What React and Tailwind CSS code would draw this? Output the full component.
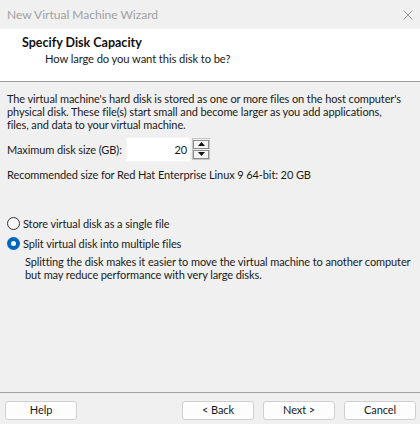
import React from "react";

function Btn({ children, className = "" }) {
  return (
    <div
      className={
        "h-[19px] w-[72px] flex items-center justify-center rounded-[3px] border border-[#d0d0d0] bg-[#fdfdfd] text-[11px] text-[#1a1a1a] " +
        className
      }
    >
      {children}
    </div>
  );
}

function SpinBtn({ up }) {
  return (
    <div className="w-[16px] h-[9px] border border-[#8c8c8c] bg-[#f4f4f4] flex items-center justify-center">
      {up ? (
        <svg width="7" height="4" viewBox="0 0 7 4">
          <path d="M3.5 0 L7 4 L0 4 Z" fill="#111" />
        </svg>
      ) : (
        <svg width="7" height="4" viewBox="0 0 7 4">
          <path d="M0 0 L7 0 L3.5 4 Z" fill="#111" />
        </svg>
      )}
    </div>
  );
}

export default function App() {
  return (
    <div className="w-[420px] h-[424px] bg-[#f0f0f0] flex flex-col overflow-hidden text-[#1a1a1a] font-['Lato',sans-serif] tracking-[-0.1px]">
      {/* Title bar */}
      <div className="h-[29px] flex items-center justify-between pl-[7px] pr-[7px] shrink-0">
        <span className="text-[12px] text-[#a0a0a0] tracking-normal">New Virtual Machine Wizard</span>
        <svg width="10" height="10" viewBox="0 0 10 10">
          <path d="M0.5 0.5 L9.5 9.5 M9.5 0.5 L0.5 9.5" stroke="#9a9a9a" strokeWidth="1" />
        </svg>
      </div>

      {/* Header */}
      <div className="h-[53px] bg-white border-b border-[#a0a0a0] shrink-0 pt-[5px]">
        <div className="pl-[22px] text-[12.5px] font-bold leading-[17px] text-[#111] tracking-normal">
          Specify Disk Capacity
        </div>
        <div className="pl-[45px] text-[11.2px] leading-[16px]">How large do you want this disk to be?</div>
      </div>

      {/* Body */}
      <div className="flex-1 px-[7px] pt-[10px] text-[11px] leading-[13px]">
        <p className="whitespace-nowrap">
          The virtual machine's hard disk is stored as one or more files on the host computer's
          <br />
          physical disk. These file(s) start small and become larger as you add applications,
          <br />
          files, and data to your virtual machine.
        </p>
        <div className="flex items-center mt-[6px]">
          <span className="w-[119px]">Maximum disk size (GB):</span>
          <div className="w-[65px] h-[25px] bg-white border border-[#f4f4f4] flex items-center justify-end pr-[3px]">
            20
          </div>
          <div className="ml-[1px] w-[18px] h-[22px] border border-[#c6c6c6] flex flex-col items-center justify-center gap-[1px] self-start mt-[1px]">
            <SpinBtn up />
            <SpinBtn />
          </div>
        </div>
        <div className="mt-[6px]">Recommended size for Red Hat Enterprise Linux 9 64-bit: 20 GB</div>

        <div className="mt-[36px] flex items-center gap-[3px]">
          <span className="w-[13px] h-[13px] rounded-full border border-[#333] bg-[#f6f6f6]" />
          <span>Store virtual disk as a single file</span>
        </div>
        <div className="mt-[7px] flex items-center gap-[3px]">
          <span className="w-[13px] h-[13px] rounded-full bg-[#0067c0] flex items-center justify-center">
            <span className="w-[5px] h-[5px] rounded-full bg-white" />
          </span>
          <span>Split virtual disk into multiple files</span>
        </div>
        <p className="mt-[5px] pl-[18px] whitespace-nowrap">
          Splitting the disk makes it easier to move the virtual machine to another computer
          <br />
          but may reduce performance with very large disks.
        </p>
      </div>

      {/* Footer */}
      <div className="h-[32px] border-t border-[#a0a0a0] shrink-0 flex items-start pt-[8px] pl-[5px] pr-[4px]">
        <Btn>Help</Btn>
        <div className="flex-1" />
        <Btn>&lt; Back</Btn>
        <Btn className="ml-[9px]">Next &gt;</Btn>
        <Btn className="ml-[9px]">Cancel</Btn>
      </div>
    </div>
  );
}
